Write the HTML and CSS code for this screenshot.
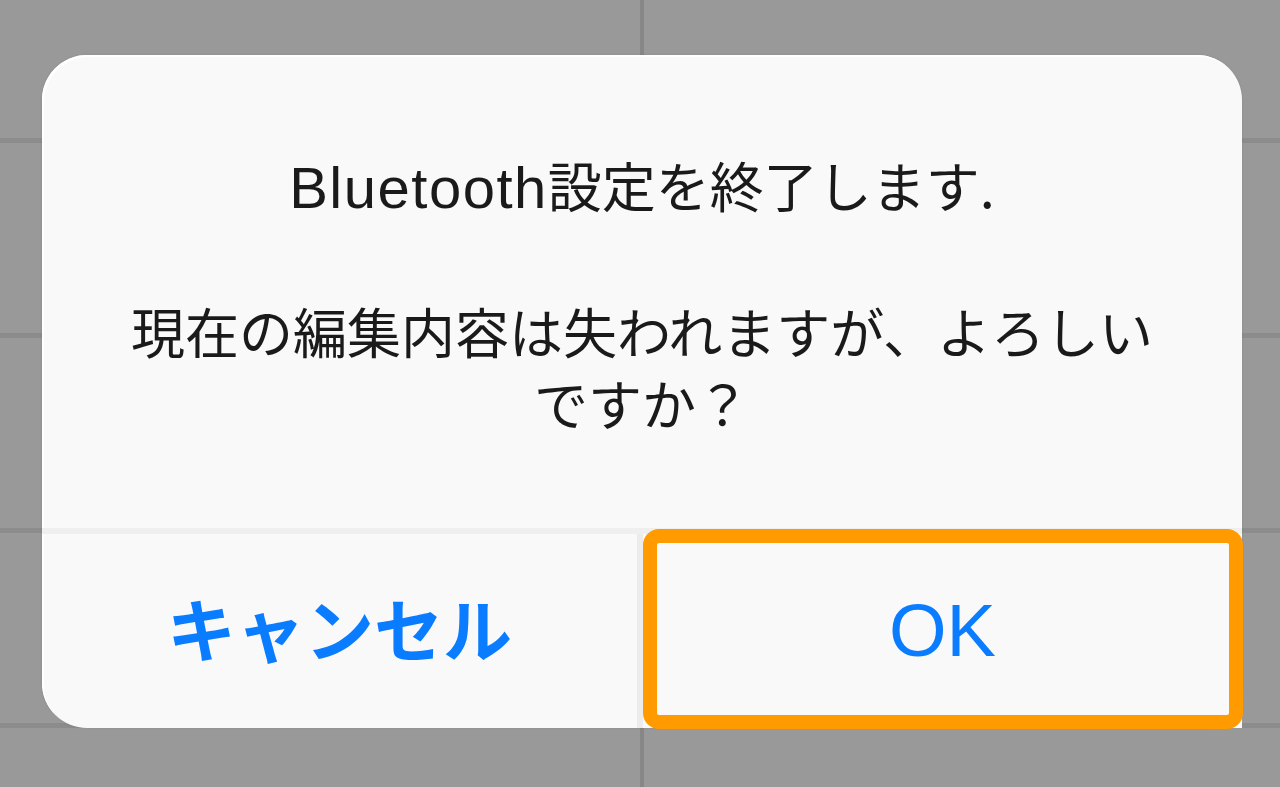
FILE: index.html
```html
<!DOCTYPE html>
<html lang="ja">
<head>
<meta charset="utf-8">
<title>Bluetooth設定</title>
<link rel="stylesheet" href="styles.css">
</head>
<body>
  <div class="dialog" role="alertdialog">
    <div class="content">
      <p class="title"><span class="latin">Bluetooth</span>設定を終了します.</p>
      <p class="message">現在の編集内容は失われますが、よろしいですか？</p>
    </div>
    <div class="actions">
      <button class="action cancel">キャンセル</button>
      <button class="action ok">OK<span class="highlight"></span></button>
    </div>
  </div>
</body>
</html>
```

FILE: styles.css
```css
html, body {
  margin: 0;
  height: 100%;
}

body {
  box-sizing: border-box;
  padding: 55px 38px 0 42px;
  overflow: hidden;
  background-color: #999999;
  background-image:
    linear-gradient(to right, transparent 640px, #878787 640px, #878787 644px, transparent 644px),
    repeating-linear-gradient(to bottom, transparent 0 138px, #8c8c8c 138px 143px, transparent 143px 195px);
  font-family: "Noto Sans CJK JP", sans-serif;
}

.dialog {
  width: 1200px;
  height: 673px;
  background: #f9f9f9;
  border-radius: 45px;
  display: flex;
  flex-direction: column;
  box-shadow: 0 0 3px rgba(0, 0, 0, 0.08), inset 2px 2px 0 #ffffff;
}

.content {
  height: 473px;
  box-sizing: border-box;
  padding: 94px 75px 0;
  text-align: center;
  color: #1a1a1a;
}

.title {
  margin: 0;
  font-size: 54px;
  line-height: 72px;
}

.latin {
  font-family: "Liberation Sans", sans-serif;
  font-size: 58px;
  letter-spacing: 1.5px;
}

.message {
  margin: 71px 0 0;
  font-size: 54px;
  line-height: 72px;
}

.actions {
  display: flex;
  height: 200px;
  box-sizing: border-box;
  border-top: 6px solid #efefef;
}

.action {
  border: 0;
  margin: 0;
  padding: 0;
  background: transparent;
  color: #0a7cff;
  display: flex;
  align-items: center;
  justify-content: center;
  line-height: 1;
  cursor: pointer;
}

.cancel {
  width: 601px;
  box-sizing: border-box;
  border-right: 6px solid #ececec;
  border-bottom-left-radius: 45px;
  font-family: "Noto Sans CJK JP", sans-serif;
  font-size: 69px;
  font-weight: 700;
  padding-bottom: 8px;
}

.ok {
  flex: 1;
  position: relative;
  background: #f9f9f9;
  font-family: "Liberation Sans", sans-serif;
  font-size: 74px;
}

.highlight {
  position: absolute;
  top: -5px;
  left: 0;
  right: -1px;
  bottom: -1px;
  border: 14px solid #ff9a00;
  border-radius: 16px;
  pointer-events: none;
}
```
